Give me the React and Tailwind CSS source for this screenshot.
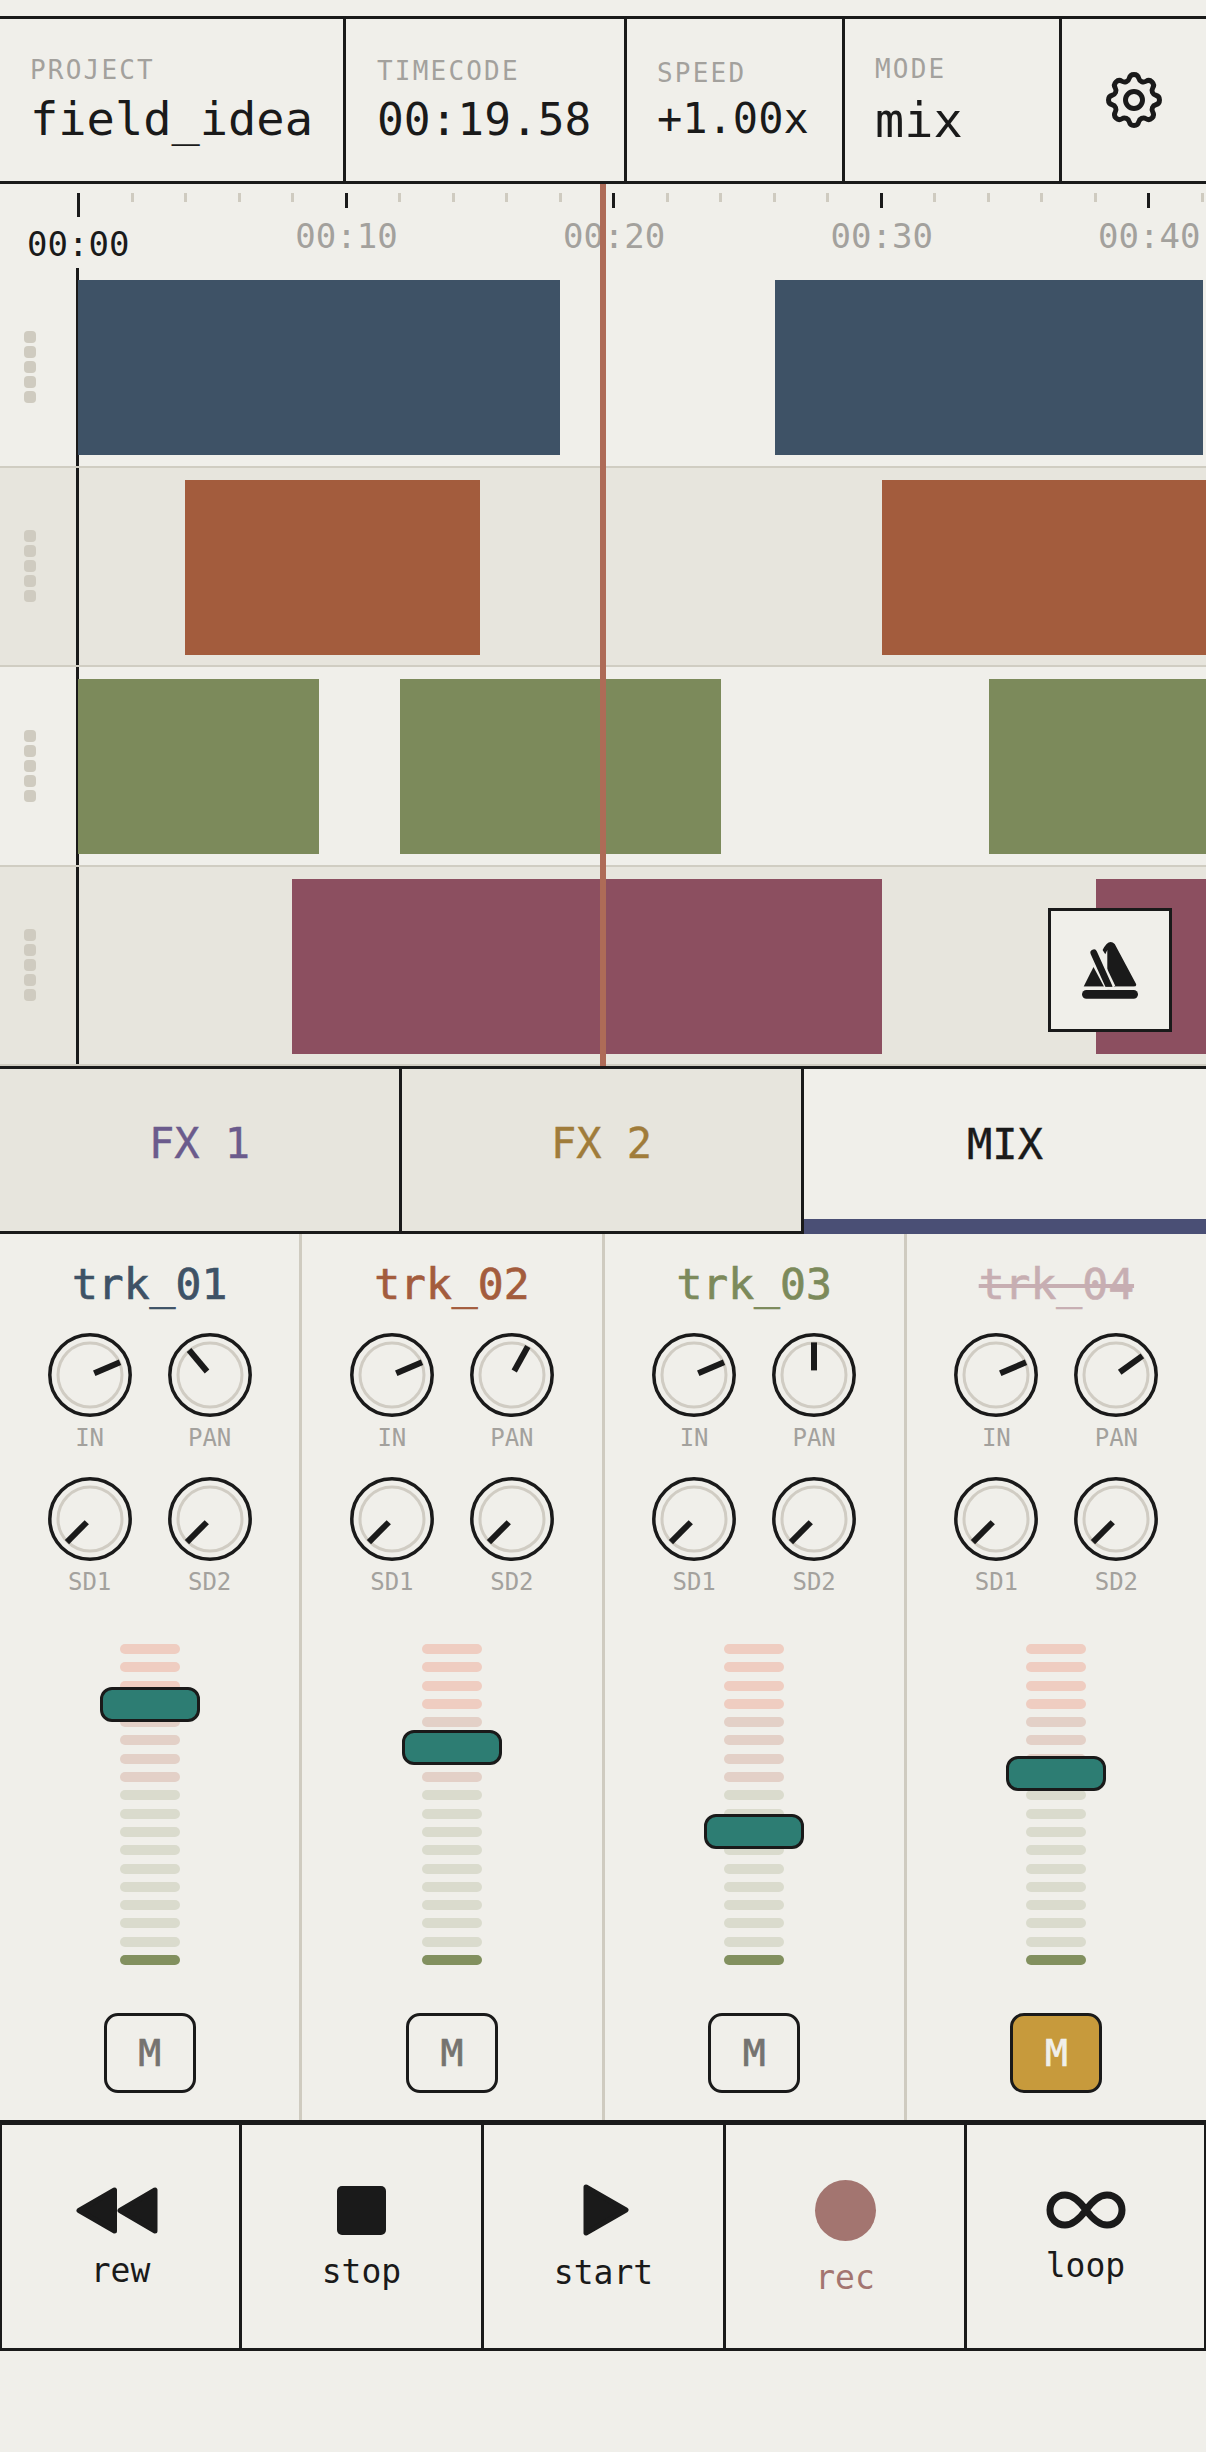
import { TbSettings } from "react-icons/tb";

const TICK_PX = 26.76;

const TRACKS = [
  {
    color: "bg-[#3e5266]",
    row: "bg-[#f0efea]",
    clips: [
      { left: 0, width: 482 },
      { left: 697, width: 428 },
    ],
  },
  {
    color: "bg-[#a35c3d]",
    row: "bg-[#e7e5dd]",
    clips: [
      { left: 107, width: 295 },
      { left: 804, width: 324 },
    ],
  },
  {
    color: "bg-[#7c8a5b]",
    row: "bg-[#f0efea]",
    clips: [
      { left: 0, width: 241 },
      { left: 321.5, width: 321.5 },
      { left: 910.5, width: 218 },
    ],
  },
  {
    color: "bg-[#8c4f60]",
    row: "bg-[#e7e5dd]",
    clips: [
      { left: 214, width: 590 },
      { left: 1018, width: 110 },
    ],
  },
];

const CHANNELS = [
  { name: "trk_01", color: "text-[#3e5266]", pan: -40, handle: 43 },
  { name: "trk_02", color: "text-[#a35c3d]", pan: 29, handle: 86 },
  { name: "trk_03", color: "text-[#7c8a5b]", pan: 0, handle: 170 },
  { name: "trk_04", color: "text-[#8c4f60]", pan: 54, handle: 112, muted: true },
];

function Ruler() {
  const ticks = [];
  for (let i = 0; i < 23; i++) {
    const major = i % 5 === 0;
    ticks.push(
      <div
        key={i}
        className={`absolute top-[9px] w-[3px] ${major ? "bg-[#1a1a1a]" : "bg-[#cfcbc0]"} ${
          i === 0 ? "h-[24px]" : major ? "h-[15px]" : "h-[9px]"
        }`}
        style={{ left: 77 + i * TICK_PX * 2 }}
      />
    );
  }
  const labels = ["00:10", "00:20", "00:30", "00:40"];
  return (
    <div className="relative h-[84px] overflow-hidden">
      {ticks}
      <div className="absolute left-[27px] top-[40px] text-[34px] leading-[40px] text-[#1a1a1a]">00:00</div>
      {labels.map((t, i) => (
        <div
          key={t}
          className="absolute top-[32px] w-[110px] text-center text-[34px] leading-[40px] text-[#a3a19d]"
          style={{ left: 346.5 + i * 267.6 - 55 }}
        >
          {t}
        </div>
      ))}
    </div>
  );
}

function Track({ track }) {
  return (
    <div className={`flex h-[199.5px] border-b-2 border-[#d0cdc2] ${track.row}`}>
      <div className="w-[79px] shrink-0 border-r-[3px] border-[#1a1a1a] flex flex-col items-center justify-center gap-[3px] pr-[16px]">
        {[0, 1, 2, 3, 4].map((i) => (
          <div key={i} className="w-[12px] h-[12px] rounded-[4px] bg-[#cfcbc0]" />
        ))}
      </div>
      <div className="relative flex-1 -ml-px overflow-hidden">
        {track.clips.map((c, i) => (
          <div
            key={i}
            className={`absolute top-[12px] h-[175px] ${track.color}`}
            style={{ left: c.left, width: c.width }}
          />
        ))}
      </div>
    </div>
  );
}

function Knob({ angle, label }) {
  return (
    <div className="flex flex-col items-center w-[84px]">
      <svg width="84" height="84" viewBox="0 0 84 84">
        <circle cx="42" cy="42" r="40.2" fill="none" stroke="#1a1a1a" strokeWidth="3.5" />
        <circle cx="42" cy="42" r="32" fill="none" stroke="#d0ccc3" strokeWidth="3" />
        <line
          x1="42"
          y1="37.4"
          x2="42"
          y2="9.4"
          stroke="#1a1a1a"
          strokeWidth="6"
          transform={`rotate(${angle} 42 42)`}
        />
      </svg>
      <div className="mt-[6px] text-[24px] leading-[30px] text-[#a3a19d]">{label}</div>
    </div>
  );
}

function segmentColor(i) {
  if (i < 4) return "bg-[#efcdc1]";
  if (i < 8) return "bg-[#e3d0c7]";
  if (i < 17) return "bg-[#dadbcd]";
  return "bg-[#82905f]";
}

function Fader({ top }) {
  return (
    <div className="relative w-[100px] flex flex-col items-center gap-[8.3px]">
      {Array.from({ length: 18 }).map((_, i) => (
        <div key={i} className={`w-[60px] h-[10px] rounded-[5px] ${segmentColor(i)}`} />
      ))}
      <div
        className="absolute left-0 w-[100px] h-[35px] rounded-[12px] border-[3px] border-[#1a1a1a] bg-[#2d7d73]"
        style={{ top }}
      />
    </div>
  );
}

function Channel({ ch, last }) {
  return (
    <div className={`flex-1 flex flex-col items-center ${last ? "" : "border-r-[3px] border-[#cfcbc0]"}`}>
      <div
        className={`mt-[24px] text-[43px] leading-[52px] [-webkit-text-stroke:0.7px_currentColor] ${ch.color} ${
          ch.muted ? "opacity-40 line-through" : ""
        }`}
      >
        {ch.name}
      </div>
      <div className="mt-[23px] grid grid-cols-2 gap-x-[36px] gap-y-[24px]">
        <Knob angle={67} label="IN" />
        <Knob angle={ch.pan} label="PAN" />
        <Knob angle={-135} label="SD1" />
        <Knob angle={-135} label="SD2" />
      </div>
      <div className="mt-[47px]">
        <Fader top={ch.handle} />
      </div>
      <div
        className={`mt-[48px] w-[92px] h-[80px] rounded-[14px] border-[3px] border-[#1a1a1a] flex items-center justify-center text-[38px] [-webkit-text-stroke:0.7px_currentColor] ${
          ch.muted ? "bg-[#c79a3c] text-[#f0efea]" : "text-[#757370]"
        }`}
      >
        M
      </div>
    </div>
  );
}

function TransportButton({ label, icon, labelClass = "", last }) {
  return (
    <div
      className={`h-[223px] pt-[4px] flex flex-col items-center justify-center gap-[17px] ${
        last ? "" : "border-r-[3px] border-[#1a1a1a]"
      }`}
    >
      {icon}
      <div className={`text-[33px] leading-[40px] ${labelClass}`}>{label}</div>
    </div>
  );
}

function MetronomeIcon() {
  return (
    <svg width="56" height="58" viewBox="367 245 166 172" fill="#1a1a1a">
      <path d="M372 380 L401 322 L432 380 Z" />
      <path d="M428 272 Q446 236 464 254 L527 372 Q530 380 520 380 L462 380 L442 340 L442 272 L436 284 Z" />
      <path d="M402 280 L452 384" stroke="#f0efea" strokeWidth="30" fill="none" />
      <path d="M402 280 L447 380" stroke="#1a1a1a" strokeWidth="20" strokeLinecap="round" fill="none" />
      <rect x="360" y="381" width="180" height="9" fill="#f0efea" />
      <rect x="367" y="390" width="166" height="26" rx="13" />
    </svg>
  );
}

export default function App() {
  return (
    <div className="min-h-[2452px] bg-[#f0efea] pt-[16px] font-['DejaVu_Sans_Mono',monospace] text-[#1a1a1a]">
      <header className="flex h-[168px] border-y-[3px] border-[#1a1a1a]">
        <div className="w-[346px] border-r-[3px] border-[#1a1a1a] pl-[30px] pt-[36px]">
          <div className="text-[26px] leading-[30px] tracking-[2.2px] text-[#a3a19d]">PROJECT</div>
          <div className="mt-[7px] text-[47px] leading-[54px]">field_idea</div>
        </div>
        <div className="w-[281px] border-r-[3px] border-[#1a1a1a] pl-[31px] pt-[37px]">
          <div className="text-[26px] leading-[30px] tracking-[2.2px] text-[#a3a19d]">TIMECODE</div>
          <div className="mt-[7px] text-[44.5px] leading-[54px]">00:19.58</div>
        </div>
        <div className="w-[218px] border-r-[3px] border-[#1a1a1a] pl-[30px] pt-[39px]">
          <div className="text-[26px] leading-[30px] tracking-[2.2px] text-[#a3a19d]">SPEED</div>
          <div className="mt-[6px] text-[42px] leading-[50px]">+1.00x</div>
        </div>
        <div className="w-[217px] border-r-[3px] border-[#1a1a1a] pl-[30px] pt-[35px]">
          <div className="text-[26px] leading-[30px] tracking-[2.2px] text-[#a3a19d]">MODE</div>
          <div className="mt-[7px] text-[48.5px] leading-[58px]">mix</div>
        </div>
        <div className="flex-1 flex items-center justify-center">
          <TbSettings size={68} strokeWidth={1.75} color="#1a1a1a" />
        </div>
      </header>

      <div className="relative">
        <Ruler />
        {TRACKS.map((t, i) => (
          <Track key={i} track={t} />
        ))}
        <div className="absolute left-[600px] top-0 bottom-0 w-[6px] bg-[#ae6b57]" />
        <div className="absolute left-[1048px] top-[724px] w-[124px] h-[124px] border-[3px] border-[#1a1a1a] bg-[#f0efea] flex items-center justify-center">
          <MetronomeIcon />
        </div>
      </div>

      <div className="flex h-[168px] border-t-[3px] border-[#1a1a1a] text-[42px] [-webkit-text-stroke:0.4px_currentColor]">
        <div className="w-[402px] pb-[13px] flex items-center justify-center bg-[#e7e5dd] border-r-[3px] border-b-[3px] border-[#1a1a1a] text-[#6b5b8c]">FX 1</div>
        <div className="w-[402px] pb-[13px] flex items-center justify-center bg-[#e7e5dd] border-r-[3px] border-b-[3px] border-[#1a1a1a] text-[#a07c3a]">FX 2</div>
        <div className="flex-1 flex items-center justify-center border-b-[15px] border-[#4a4f75]">MIX</div>
      </div>

      <div className="flex h-[886px]">
        {CHANNELS.map((ch, i) => (
          <Channel key={ch.name} ch={ch} last={i === 3} />
        ))}
      </div>

      <div className="grid grid-cols-[240px_242px_242px_241px_1fr] border-t-[5px] border-b-[3px] border-x-2 border-[#1a1a1a]">
        <TransportButton
          label="rew"
          icon={
            <svg className="-ml-[7px]" width="82" height="47" viewBox="0 0 82 47" fill="#1a1a1a" stroke="#1a1a1a" strokeWidth="5" strokeLinejoin="round">
              <path d="M3 23.5 L38.5 3 L38.5 44 Z" />
              <path d="M44 23.5 L79 3 L79 44 Z" />
            </svg>
          }
        />
        <TransportButton label="stop" icon={<div className="w-[49px] h-[49px] rounded-[5px] bg-[#1a1a1a]" />} />
        <TransportButton
          label="start"
          icon={
            <svg className="ml-[4px]" width="46" height="52" viewBox="0 0 46 52" fill="#1a1a1a" stroke="#1a1a1a" strokeWidth="5" strokeLinejoin="round">
              <path d="M3 3 L43 26 L3 49 Z" />
            </svg>
          }
        />
        <TransportButton
          label="rec"
          labelClass="text-[#a37570]"
          icon={<div className="w-[61px] h-[61px] rounded-full bg-[#a37570]" />}
        />
        <TransportButton
          label="loop"
          last
          icon={
            <svg width="80" height="38" viewBox="0 0 80 38" fill="none" stroke="#1a1a1a" strokeWidth="7">
              <path d="M40 19 C32 8 26 4 19 4 C10 4 4 11 4 19 C4 27 10 34 19 34 C26 34 32 30 40 19 C48 8 54 4 61 4 C70 4 76 11 76 19 C76 27 70 34 61 34 C54 34 48 30 40 19 Z" />
            </svg>
          }
        />
      </div>
    </div>
  );
}
